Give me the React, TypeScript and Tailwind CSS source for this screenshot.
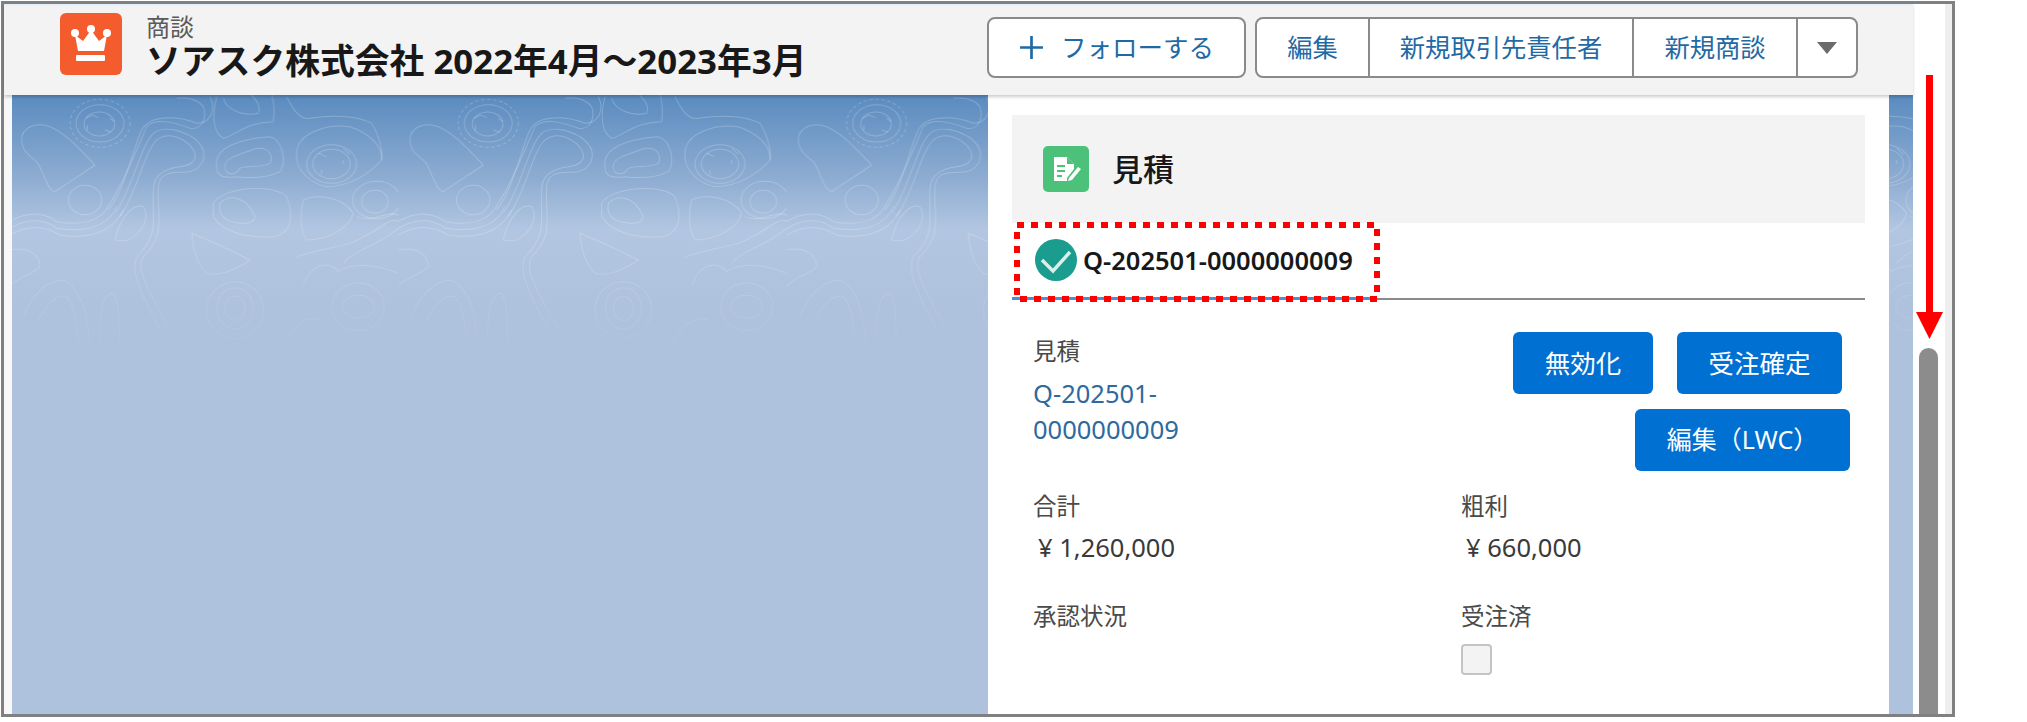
import React from 'react';

const font = { fontFamily: '"Noto Sans", "Noto Sans CJK JP", sans-serif' };

const Field = ({ label, value }: { label: string; value?: string }) => (
  <div>
    <div className="text-[23.5px] leading-[30px] text-[#4a4a4a]">{label}</div>
    {value && <div className="mt-[11px] pl-[5px] text-[25.5px] leading-[30px] text-[#3a3a3a]">{value}</div>}
  </div>
);

// contour lines behind the page, one tile repeated (paths are in 3x units)
const Topo = () => (
  <svg className="absolute left-0 top-0 h-[300px] w-full" fill="none">
    <defs>
      <pattern id="topo" x="-2" y="-5" width="388.33" height="305" patternUnits="userSpaceOnUse">
        <g transform="scale(0.3333)" stroke="#ffffff" strokeOpacity="0.22" strokeWidth="3" fill="none">
          <ellipse cx="270" cy="100" rx="90" ry="72" strokeDasharray="10 8" />
          <ellipse cx="270" cy="100" rx="72" ry="56" />
          <ellipse cx="268" cy="102" rx="46" ry="36" />
          <path d="M228 85l20-10 18 8M232 105v16M285 120l18 6M300 85l14 10" />
          <path d="M35 150C35 110 80 95 120 110C170 130 220 190 255 225C220 250 170 280 135 305C110 300 100 240 80 215C55 195 35 180 35 150Z" />
          <path d="M300 340C340 280 380 180 410 110C440 80 500 100 540 115C580 120 590 80 580 50C565 30 540 20 500 25" />
          <path d="M315 370C370 290 390 170 430 130C470 100 560 130 580 180C590 220 560 240 540 245C490 250 450 240 445 290C440 380 470 430 400 500C370 540 440 640 480 720" />
          <path d="M295 360C345 300 370 170 395 120C420 70 510 80 560 100C600 100 620 60 600 20" />
          <path d="M330 380C385 300 400 190 440 150C480 120 540 150 555 190C560 220 530 228 510 230C470 235 430 250 430 300C425 380 450 430 385 495C350 540 410 640 450 720" />
          <path d="M620 230C610 170 700 145 780 140C820 150 830 220 810 245C770 265 720 265 680 260C640 265 620 260 620 230Z" />
          <path d="M645 225C650 200 700 190 740 175C780 170 790 200 780 220C750 235 710 225 690 235C670 265 640 250 645 225Z" />
          <path d="M610 340C640 290 790 280 830 320C850 370 850 430 790 440C720 445 640 430 610 380Z" />
          <path d="M630 340C660 310 710 320 735 380C730 410 680 400 650 390C630 375 625 360 630 340Z" />
          <path d="M640 25C650 60 700 80 745 70C755 40 730 25 720 10" />
          <path d="M620 20C610 60 600 120 640 145C690 130 700 100 790 95C795 60 790 30 785 10" />
          <path d="M830 20C850 60 870 90 900 85C960 75 1040 75 1085 100C1110 140 1120 190 1115 210" />
          <path d="M860 190C860 130 950 100 1020 110C1080 130 1120 170 1115 210C1080 250 1020 290 950 290C900 280 855 240 860 190Z" />
          <ellipse cx="965" cy="222" rx="75" ry="58" />
          <ellipse cx="965" cy="222" rx="56" ry="44" />
          <path d="M925 190l24 10M1000 175l20 18M935 240v14M1000 210v12" />
          <ellipse cx="225" cy="330" rx="50" ry="44" />
          <path d="M315 450C330 380 370 340 400 350C420 380 400 430 350 452Z" />
          <path d="M880 330C920 310 1000 320 1030 370C1020 410 960 450 890 450C870 420 870 370 880 330Z" />
          <ellipse cx="1095" cy="335" rx="40" ry="34" />
          <ellipse cx="1100" cy="330" rx="72" ry="56" />
          <path d="M1170 280C1190 240 1240 220 1250 270C1250 290 1200 310 1170 280Z" />
          <path d="M0 395C60 360 110 370 140 395C200 405 270 405 300 340" />
          <path d="M0 415C60 380 110 390 140 415C210 425 290 420 320 350" />
          <path d="M0 435C60 400 110 410 150 435C220 445 300 440 340 360" />
          <path d="M860 500C950 470 1020 470 1060 440C1110 420 1140 380 1165 395" />
          <path d="M1000 520C1030 480 1100 470 1165 415" />
          <path d="M1040 380C1090 400 1130 360 1165 375" />
          <path d="M545 430C570 440 640 470 720 510C680 540 620 560 590 550C560 520 550 480 545 430Z" />
          <ellipse cx="675" cy="655" rx="30" ry="36" />
          <ellipse cx="675" cy="655" rx="54" ry="62" />
          <ellipse cx="675" cy="660" rx="85" ry="85" />
          <path d="M40 680C70 600 130 560 170 575C220 610 230 680 240 760" />
          <path d="M80 700C110 640 140 610 170 620C195 650 200 700 205 760" />
          <path d="M270 760C265 680 275 610 310 610C330 640 325 700 330 760" />
          <path d="M880 590C900 520 960 510 985 545C1020 520 1090 520 1165 550C1170 600 1190 520 1250 470" />
          <ellipse cx="1045" cy="650" rx="48" ry="34" />
          <ellipse cx="1045" cy="650" rx="78" ry="72" />
          <path d="M0 480C50 470 90 490 90 530C60 560 20 560 0 590" />
          <path d="M820 760C860 690 900 680 930 690" />
        </g>
      </pattern>
      <linearGradient id="fade" x1="0" y1="0" x2="0" y2="1">
        <stop offset="0.45" stopColor="#fff" />
        <stop offset="1" stopColor="#000" />
      </linearGradient>
      <mask id="topoFade"><rect width="100%" height="100%" fill="url(#fade)" /></mask>
    </defs>
    <rect width="100%" height="100%" fill="url(#topo)" mask="url(#topoFade)" />
  </svg>
);

const CrownIcon = () => (
  <svg viewBox="0 0 62 62" className="h-[62px] w-[62px] shrink-0">
    <rect width="62" height="62" rx="6" fill="#f45b2d" />
    <g fill="#fff">
      <circle cx="15" cy="20" r="4" />
      <circle cx="31" cy="16" r="4" />
      <circle cx="47" cy="20" r="4" />
      <path d="M15 22l8 6 8-11 8 11 8-6-3 16H18z" />
      <rect x="16" y="42" width="29" height="6" rx="1" />
    </g>
  </svg>
);

const QuoteIcon = () => (
  <svg viewBox="0 0 46 46" className="h-[46px] w-[46px] shrink-0">
    <rect width="46" height="46" rx="5" fill="#4cc17a" />
    <path d="M11 11h13l7 7v5l-7 9v3H11z" fill="#fff" />
    <path d="M24 11v7h7z" fill="#4cc17a" />
    <path d="M14 20h8M14 25h8M14 30h5" stroke="#4cc17a" strokeWidth="2" />
    <path d="M26 32l9-11 3 2-9 11-4 1z" fill="#fff" />
  </svg>
);

export default function App() {
  return (
    <div className="relative h-[722px] w-[2027px] overflow-hidden bg-white" style={font}>
      <div className="ml-px mt-px flex h-[716px] w-[1954px] border-[3px] border-[#808080]">
        {/* page */}
        <div className="flex w-[1909px] shrink-0 flex-col bg-[#f8f8f8]">
          <header className="z-10 flex h-[91px] shrink-0 items-start border-t-2 border-[#e2f1fb] bg-[#f3f3f3] pl-[56px] pr-[55px] pt-[7px] shadow-[0_2px_3px_rgba(0,0,0,0.2)]">
            <CrownIcon />
            <div className="ml-[24px]">
              <div className="mt-px text-[24px] leading-[26px] text-[#5a5a5a]">商談</div>
              <div className="mt-[3px] whitespace-nowrap text-[34.8px] font-bold leading-[36px] text-[#181818]">ソアスク株式会社 2022年4月〜2023年3月</div>
            </div>
            <button className="ml-auto mt-[4px] flex h-[61px] w-[259px] items-center justify-center gap-[17px] rounded-lg border-2 border-[#8a8a8a] bg-white text-[25.5px] text-[#1f6aa5]">
              <svg viewBox="0 0 24 24" className="h-[25px] w-[25px]" stroke="#1f6aa5" strokeWidth="2.6">
                <path d="M12 1v22M1 12h22" />
              </svg>
              フォローする
            </button>
            <div className="ml-[9px] mt-[4px] flex h-[61px] w-[603px] rounded-lg border-2 border-[#8a8a8a] bg-white text-[25.3px] text-[#1f6aa5]">
              <div className="flex w-[113px] items-center justify-center border-r-2 border-[#8a8a8a]">編集</div>
              <div className="flex w-[264px] items-center justify-center border-r-2 border-[#8a8a8a]">新規取引先責任者</div>
              <div className="flex w-[164px] items-center justify-center border-r-2 border-[#8a8a8a]">新規商談</div>
              <div className="flex flex-1 items-center justify-center">
                <svg viewBox="0 0 20 12" className="h-[12px] w-[20px]"><path d="M0 0h20L10 12z" fill="#6b6b6b" /></svg>
              </div>
            </div>
          </header>

          <div className="relative ml-[8px] flex min-h-0 flex-1 justify-end overflow-hidden bg-[linear-gradient(#5a8bbf_0,#8fadd2_85px,#b2c6e1_135px,#aec1dd_210px,#aec1dd_100%)] pr-[24px]">
            <Topo />
            <div className="relative w-[901px] bg-white px-[24px] pt-[20px]">
              <div className="flex h-[108px] items-center bg-[#f3f3f3] pl-[31px]">
                <QuoteIcon />
                <div className="ml-[23px] text-[31px] font-medium text-[#181818]">見積</div>
              </div>

              <div className="flex h-[77px] border-b-2 border-[#8a8a8a]">
                <div className="flex h-[77px] w-[364px] items-center border-b-[3px] border-[#4a90d9] pl-[23px]">
                  <svg viewBox="0 0 42 42" className="h-[42px] w-[42px] shrink-0">
                    <circle cx="21" cy="21" r="21" fill="#1a9c8e" />
                    <path d="M7 21l11 11 17-19" fill="none" stroke="#d8f0ec" strokeWidth="3.5" />
                  </svg>
                  <span className="ml-[6px] text-[25.5px] font-semibold text-[#181818]">Q-202501-0000000009</span>
                </div>
              </div>

              <div className="flex justify-between pl-[21px] pr-[15px] pt-[32px]">
                <div className="pt-[4px]">
                  <div className="text-[23.5px] leading-[30px] text-[#4a4a4a]">見積</div>
                  <div className="mt-[9px] text-[25.5px] leading-[36px] text-[#2e6a9e]">
                    Q-202501-<br />0000000009
                  </div>
                </div>
                <div className="flex w-[337px] flex-col items-end gap-[15px]">
                  <div className="flex gap-[24px] pr-[8px]">
                    <button className="h-[62px] w-[140px] rounded-md bg-[#0070d2] text-[25.5px] text-white">無効化</button>
                    <button className="h-[62px] w-[165px] rounded-md bg-[#0070d2] text-[25.5px] text-white">受注確定</button>
                  </div>
                  <button className="h-[62px] w-[215px] rounded-md bg-[#0070d2] text-[25px] text-white">編集（LWC）</button>
                </div>
              </div>

              <div className="mt-[20px] grid grid-cols-[428px_1fr] gap-y-[39px] pl-[21px]">
                <Field label="合計" value="¥ 1,260,000" />
                <Field label="粗利" value="¥ 660,000" />
                <Field label="承認状況" />
                <div>
                  <div className="text-[23.5px] leading-[30px] text-[#4a4a4a]">受注済</div>
                  <div className="mt-[13px] h-[31px] w-[31px] rounded border-2 border-[#c4c4c4] bg-[#f3f3f3]" />
                </div>
              </div>
            </div>
          </div>
        </div>

        {/* scrollbar */}
        <div className="flex flex-1 border-r-[7px] border-[#eeeeee] bg-white pl-[6px] pr-[7px]">
          <div className="mt-[344px] flex-1 rounded-t-[10px] bg-[#8c8c8c]" />
        </div>
      </div>

      {/* annotations */}
      <svg className="absolute left-[1014px] top-[222px] h-[80px] w-[366px]" fill="none">
        <rect x="3" y="3" width="360" height="74" stroke="#ff0000" strokeWidth="6" strokeDasharray="7 7" />
      </svg>
      <svg className="absolute left-[1916px] top-[75px] h-[264px] w-[27px]">
        <rect x="10" y="0" width="7" height="240" fill="#ff0000" />
        <path d="M0 237h27l-13.5 27z" fill="#ff0000" />
      </svg>
    </div>
  );
}
